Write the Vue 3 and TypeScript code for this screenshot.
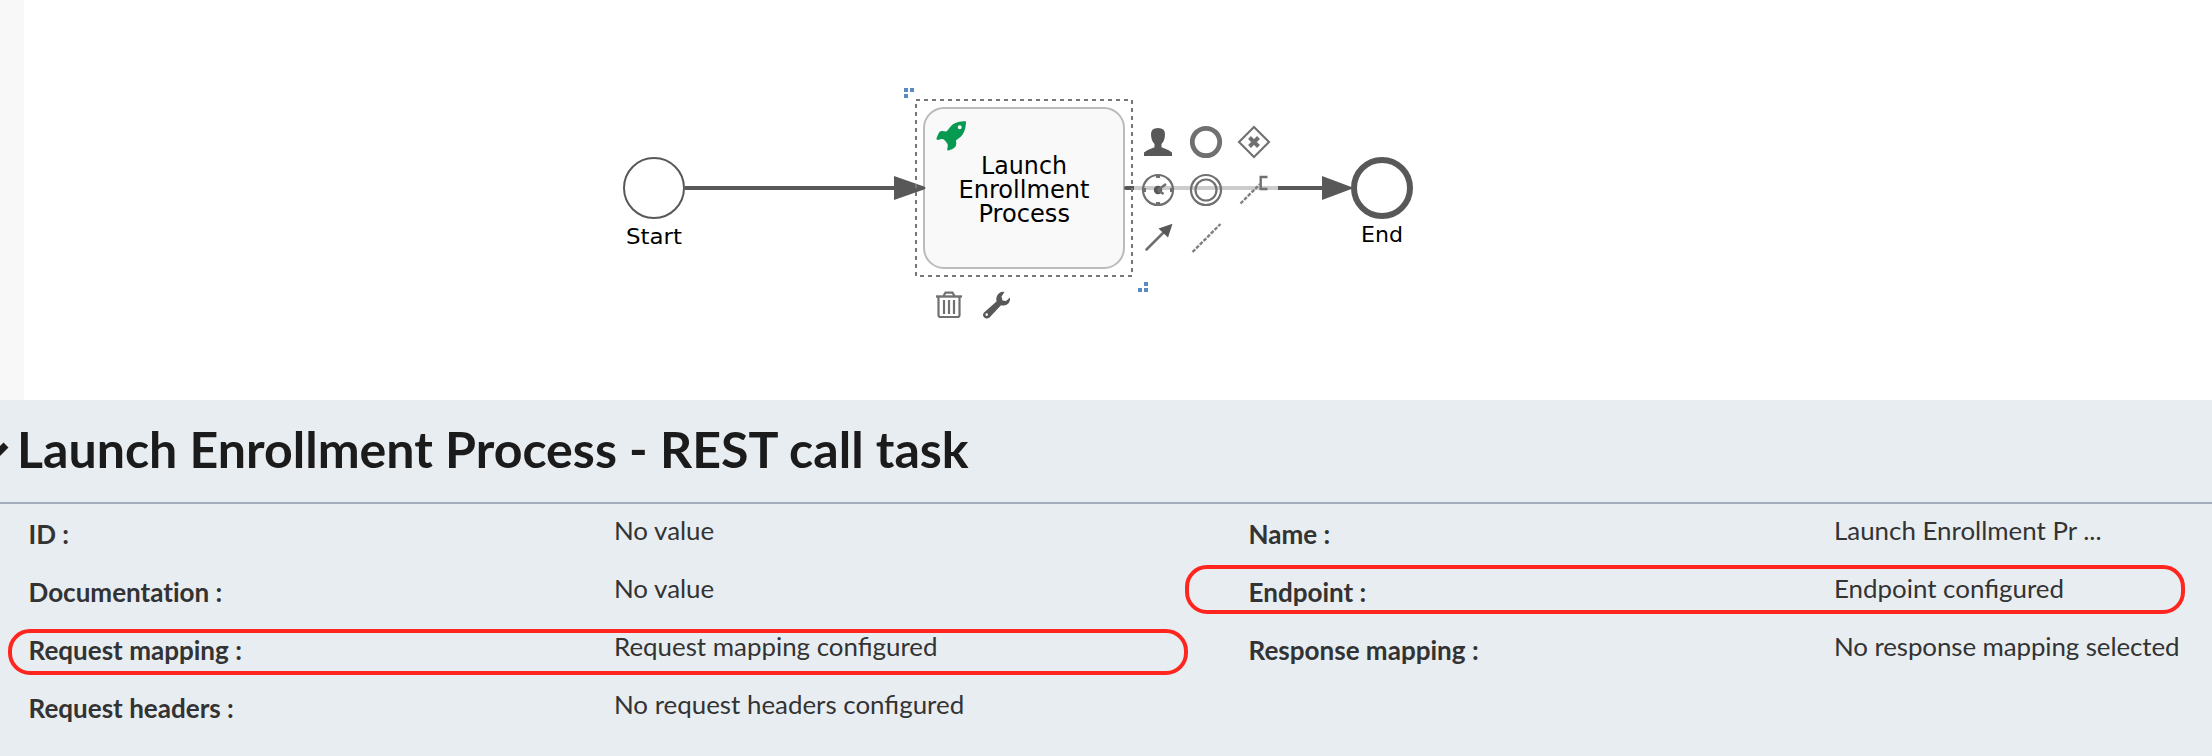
<script setup lang="ts">
interface Property {
  label: string
  value: string
  tight?: boolean
}

const title = 'Launch Enrollment Process - REST call task'

const properties: Property[] = [
  { label: 'ID :', value: 'No value' },
  { label: 'Name :', value: 'Launch Enrollment Pr ...' },
  { label: 'Documentation :', value: 'No value' },
  { label: 'Endpoint :', value: 'Endpoint configured' },
  { label: 'Request mapping :', value: 'Request mapping configured' },
  { label: 'Response mapping :', value: 'No response mapping selected', tight: true },
  { label: 'Request headers :', value: 'No request headers configured' },
]
</script>

<template>
  <main class="page">
    <section class="modeler">
      <div class="gutter"></div>
      <svg class="canvas" viewBox="24 0 2188 400" width="2188" height="400">
        <!-- start event -->
        <circle class="event" cx="654" cy="188" r="30" stroke-width="2" />
        <text class="caption" x="626" y="243.500" textLength="56" lengthAdjust="spacingAndGlyphs">Start</text>

        <!-- selected task -->
        <rect class="task" x="924" y="108" width="200" height="160" rx="20" />
        <path class="rocket" fill-rule="evenodd" d="M966 121.3C966 127 964.500 133 961 136.500C959 138.500 957 139.500 956 140.300C956.300 143 956.500 145 955.500 146.500C954.500 148.500 951 149.500 948.500 150.500Q946.800 150.500 947.200 149C948 146.500 948.200 144.500 946.500 142.500C944.500 140 943.500 138.500 941.500 139C939.500 139.500 938 140.500 936.700 139.500Q936 138.500 937 137C938.500 134 939 131.500 941 131C943.500 130.700 945 131.700 946.800 131.300C948.500 129.500 950 126.500 953 124.300C956.500 121.800 961.500 121 966 121.300ZM959.700 125.200A2 2 0 1 0 959.700 129.200A2 2 0 1 0 959.700 125.200Z" />
        <text class="task-name" x="981" y="174" textLength="86" lengthAdjust="spacingAndGlyphs">Launch</text>
        <text class="task-name" x="958.500" y="198" textLength="131" lengthAdjust="spacingAndGlyphs">Enrollment</text>
        <text class="task-name" x="978.500" y="222" textLength="91.500" lengthAdjust="spacingAndGlyphs">Process</text>

        <!-- sequence flows -->
        <path class="flow" d="M685 188H896" />
        <path class="head" d="M894 176L924 186.500Q927 188 924 189.500L894 200Z" />
        <path class="flow" d="M1126 188H1134" />
        <circle class="head" cx="1126" cy="188" r="2" />
        <path class="flow faded" d="M1134 188H1278" />
        <path class="flow" d="M1278 188H1324" />
        <path class="head" d="M1322 176L1354 188L1322 200Z" />

        <!-- end event -->
        <circle class="event" cx="1382" cy="188" r="28" stroke-width="6" />
        <text class="caption" x="1361" y="242" textLength="42" lengthAdjust="spacingAndGlyphs">End</text>

        <!-- selection outline and resize handles -->
        <rect class="outline" x="916" y="100" width="216" height="176" />
        <path class="handle" d="M904 88h4v4h-4zM910 88h4v4h-4zM904 94h4v4h-4zM1144 282h4v4h-4zM1138 288h4v4h-4zM1144 288h4v4h-4z" />

        <!-- user task -->
        <path class="solid" d="M1144 156V152.500Q1148 149.500 1154.500 147.300V144Q1151 140.500 1151 134Q1151 128 1158 128Q1165 128 1165 134Q1165 140.500 1161.500 144V147.300Q1168 149.500 1172 152.500V156Z" />
        <!-- end event -->
        <circle class="line" cx="1206" cy="142" r="13.700" stroke-width="4.800" />
        <!-- gateway -->
        <path class="line" d="M1254 127L1269 142L1254 157L1239 142Z" stroke-width="2.100" />
        <path class="line" d="M1249.500 137.500L1258.500 146.500M1258.500 137.500L1249.500 146.500" stroke-width="4" />
        <!-- timer event -->
        <circle class="line" cx="1158" cy="190" r="15" stroke-width="2.200" />
        <path class="line" d="M1158 174.500V178M1158 202V205.500M1142.500 190H1146M1170 190H1173.500" stroke-width="4" />
        <circle class="solid" cx="1158" cy="190" r="4.200" />
        <path class="line" d="M1158 190L1166 184M1158 190L1163.500 194" stroke-width="2.600" />
        <!-- intermediate event -->
        <circle class="line" cx="1206" cy="190" r="15" stroke-width="2.200" />
        <circle class="line" cx="1206" cy="190" r="10.500" stroke-width="2.200" />
        <!-- text annotation -->
        <path class="line" d="M1267.500 177H1260.700V189H1267.500" stroke-width="2.400" />
        <path class="line dotted" d="M1240.500 203.500L1260 184" />
        <!-- connect tool -->
        <path class="line" d="M1146.500 249.500L1163 233" stroke-width="2.600" stroke-linecap="round" />
        <path class="solid" d="M1172.500 223.800L1168 237.500L1158.500 228.500Z" />
        <!-- association -->
        <path class="line dotted" d="M1192.500 252L1220.500 224" />
        <!-- remove -->
        <path class="line" d="M938.500 297V315Q938.500 317 940.500 317H957.500Q959.500 317 959.500 315V297M944 300V314M949 300V314M954 300V314" stroke-width="2.200" />
        <path class="line" d="M936 296.500H962" stroke-width="2.400" />
        <path class="line" d="M943.500 296L945.500 292.700H952.500L954.500 296" stroke-width="2.200" />
        <!-- change type -->
        <path class="solid" fill-rule="evenodd" d="M1004.500 292L1001.500 296.500L1002.500 300.500L1006 301L1010 297.500Q1010.500 302 1007 304.500Q1004.500 306 1001 305.300L989.300 317.800Q986.500 319.500 984 317.300Q981.800 314.800 984.300 312.200L996.500 301.500Q995.500 297 998.500 293.700Q1001 291.200 1004.500 292ZM986.700 313.300a1.300 1.300 0 1 0 0 2.600a1.300 1.300 0 1 0 0-2.600Z" />
      </svg>
    </section>

    <section class="panel">
      <header class="panel-header">
        <svg class="chevron" width="20" height="20" viewBox="0 0 20 20">
          <path d="M-4 4L7 15L17 5" />
        </svg>
        <h1>{{ title }}</h1>
      </header>
      <dl class="properties">
        <div v-for="property in properties" :key="property.label" class="property">
          <dt>{{ property.label }}</dt>
          <dd :class="{ tight: property.tight }">{{ property.value }}</dd>
        </div>
      </dl>
      <div class="highlight request"></div>
      <div class="highlight endpoint"></div>
    </section>
  </main>
</template>

<style>
body {
  margin: 0;
  overflow: hidden;
}
</style>

<style scoped>
.page {
  width: 2212px;
  height: 756px;
  overflow: hidden;
  background: #fff;
  font-family: Lato, sans-serif;
}

.modeler {
  display: flex;
  height: 400px;
}

.gutter {
  width: 24px;
  background: #f8f8f8;
}

.canvas {
  display: block;
  flex: none;
}

.event {
  fill: #fff;
  stroke: #585858;
}

.caption,
.task-name {
  font-family: "DejaVu Sans", sans-serif;
  fill: #000;
}

.caption {
  font-size: 21.5px;
}

.task-name {
  font-size: 24px;
}

.task {
  fill: #f9f9f9;
  stroke: #bbb;
  stroke-width: 2;
}

.rocket {
  fill: #069a51;
}

.flow {
  fill: none;
  stroke: #585858;
  stroke-width: 4;
}

.faded {
  stroke: #ccc;
}

.head,
.solid {
  fill: #585858;
}

.line {
  fill: none;
  stroke: #707070;
}

.dotted {
  stroke: #808080;
  stroke-width: 2.4;
  stroke-dasharray: 3.8 1.4;
}

.outline {
  fill: none;
  stroke: #777;
  stroke-width: 2;
  stroke-dasharray: 4 4;
}

.handle {
  fill: #5a8bbf;
}

.panel {
  position: relative;
  height: 356px;
  background: #e8edf1;
}

.panel-header {
  display: flex;
  align-items: center;
  box-sizing: border-box;
  height: 104px;
  padding-bottom: 4px;
  border-bottom: 2px solid #a2acba;
}

.chevron {
  flex: none;
  width: 20px;
  margin: 2px 8px 0 -11px;
  fill: none;
  stroke: #1b1b1b;
  stroke-width: 7;
}

h1 {
  margin: 0;
  font-size: 50.1px;
  line-height: 62px;
  font-weight: 700;
  color: #1b1b1b;
  white-space: nowrap;
}

.properties {
  display: grid;
  grid-template-columns: 1220px 1fr;
  grid-auto-rows: 58px;
  margin: 0;
  padding-left: 28px;
  font-size: 25.9px;
  line-height: 32px;
  color: #333;
}

.property {
  display: grid;
  grid-template-columns: 586px 1fr;
  white-space: nowrap;
}

dt {
  padding: 14px 0 0 0.5px;
  font-size: 26.05px;
  font-weight: 700;
  font-variant-ligatures: none;
}

dd {
  margin: 0;
  padding-top: 10px;
}

.tight {
  letter-spacing: -0.09px;
}

.highlight {
  position: absolute;
  box-sizing: border-box;
  border: 4px solid #ff2620;
  border-radius: 22px;
}

.request {
  left: 8px;
  top: 229px;
  width: 1180px;
  height: 46px;
}

.endpoint {
  left: 1185px;
  top: 165px;
  width: 1000px;
  height: 49px;
}
</style>
